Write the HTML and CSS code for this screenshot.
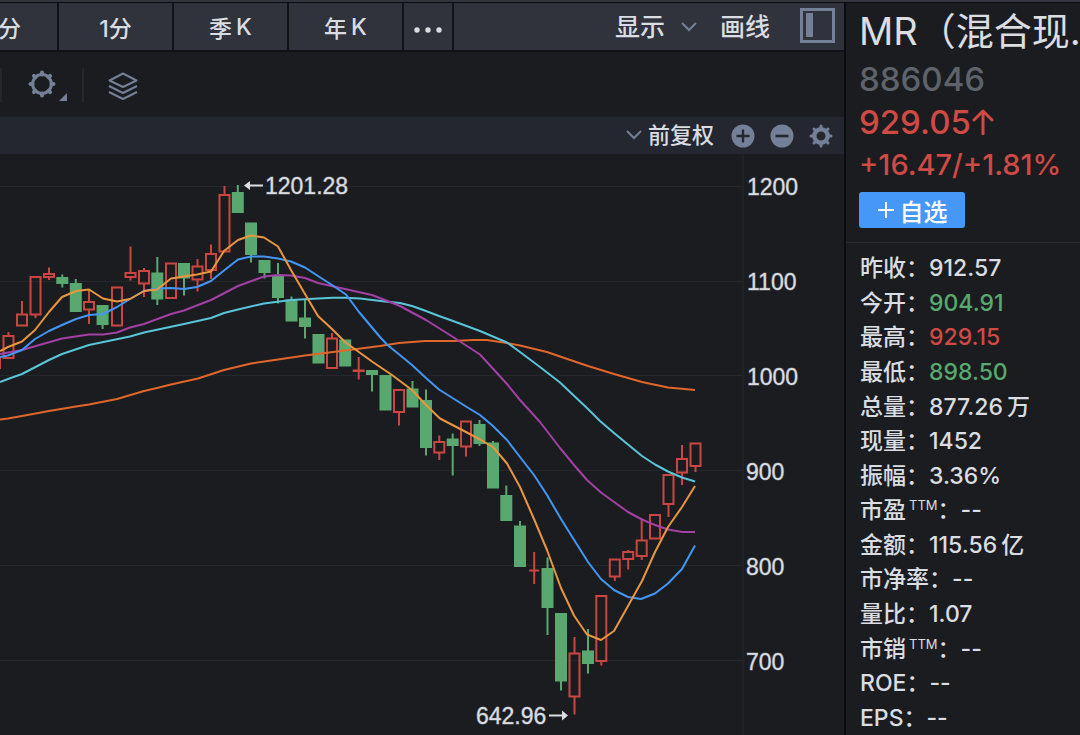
FILE: index.html
```html
<!DOCTYPE html>
<html lang="zh-CN">
<head>
<meta charset="utf-8">
<title>MR（混合现实） 886046</title>
<link rel="stylesheet" href="styles.css">
</head>
<body>
<div class="app">
  <main class="main">
    <nav class="tabs">
      <button class="tab tab-first">分</button>
      <button class="tab">1分</button>
      <button class="tab"><span>季</span><span>K</span></button>
      <button class="tab"><span>年</span><span>K</span></button>
      <button class="tab tab-more" aria-label="更多"><svg width="30" height="8" viewBox="0 0 30 8"><circle cx="4" cy="4" r="2.700"/><circle cx="15" cy="4" r="2.700"/><circle cx="26" cy="4" r="2.700"/></svg></button>
      <div class="tools">
        <button class="tool">显示<svg class="chevron" width="16" height="10" viewBox="0 0 16 10"><path d="M1 1l7 7 7-7"/></svg></button>
        <button class="tool">画线</button>
        <button class="tool" aria-label="侧栏"><svg width="35" height="35" viewBox="0 0 35 35"><rect x="1.5" y="1.5" width="32" height="32" fill="none" stroke="#738097" stroke-width="3"/><rect x="6" y="5" width="7" height="24" fill="#738097"/></svg></button>
      </div>
    </nav>
    <div class="iconbar">
      <span class="sep sep-edge"></span>
      <button class="icon-btn icon-gear" aria-label="设置"><svg width="40" height="32" viewBox="0 0 40 32">
        <circle cx="14" cy="15" r="9.4" fill="none" stroke="#738097" stroke-width="3"/>
        <path d="M14 3.500v2M14 24.500v2M2.500 15h2M23.500 15h2M5.900 6.900l1.400 1.400M20.700 21.700l1.400 1.400M5.900 23.100l1.400-1.400M20.700 8.300l1.400-1.400" stroke="#738097" stroke-width="4" stroke-linecap="round"/>
        <path d="M39 24v8h-8z" fill="#738097"/></svg></button>
      <span class="sep"></span>
      <button class="icon-btn icon-layers" aria-label="图层"><svg width="30" height="28" viewBox="0 0 30 28" fill="none" stroke="#738097" stroke-width="2" stroke-linejoin="round"><path d="M15 1.500L28.500 8.500 15 15 1.500 8.500z"/><path d="M1 14l14 7 14-7M1 20l14 7 14-7"/></svg></button>
    </div>
    <div class="adjust">
      <button class="adjust-label"><svg class="chevron" width="16" height="10" viewBox="0 0 16 10"><path d="M1 1l7 7 7-7"/></svg>前复权</button>
      <button class="icon-btn" aria-label="放大"><svg width="24" height="24" viewBox="0 0 24 24"><circle cx="12" cy="12" r="11.500" fill="#738097"/><path d="M12 5.500v13M5.500 12h13" stroke="#24272f" stroke-width="2.400"/></svg></button>
      <button class="icon-btn" aria-label="缩小"><svg width="24" height="24" viewBox="0 0 24 24"><circle cx="12" cy="12" r="11.500" fill="#738097"/><path d="M5.500 12h13" stroke="#24272f" stroke-width="2.600"/></svg></button>
      <button class="icon-btn" aria-label="指标设置"><svg width="24" height="24" viewBox="0 0 24 24" fill="none" stroke="#738097"><circle cx="12" cy="12" r="6.700" stroke-width="4.400"/><path d="M12 2v2M12 20v2M2 12h2M20 12h2M5 5l1.300 1.300M17.700 17.700l1.300 1.300M5 19l1.300-1.300M17.700 6.300L19 5" stroke-width="3" stroke-linecap="round"/></svg></button>
    </div>
    <svg class="chart" viewBox="0 154 844 581" preserveAspectRatio="xMinYMin meet" role="img" aria-label="K线图">
      <path class="grid" d="M0 186.500H743M0 281.500H743M0 375.500H743M0 470.500H743M0 565.500H743M0 660.500H743M743 154V735"/>
      <g id="candles"></g>
      <g class="averages">
        <polyline stroke="#e0662b" points="0,419.500 8,418.500 22,416 49,411 76,406.500 89,404.500 117,399 144,391 157,388 171,384.500 198,378.500 224,370 251,363.500 278,359.500 305,355.500 345,350.500 380,346 399,343 425,341 453,341 473,340 487,340 507,343 520,345.500 547,352 560,356.500 588,366 614,374 642,382 668,387.500 695,390"/>
        <polyline stroke="#59c5d8" points="0,382 8,379 22,374 49,360 62,354 89,345 130,336.500 144,332.500 184,324 211,318 224,313 238,309.500 264,303.500 291,300 318,298.500 333,297.800 345,297.800 360,298.500 385,301.500 400,303 412,306 426,311 439,316 453,321 480,331 507,342.500 520,352 540,367 560,382.500 588,409 600,421 614,433 642,456 655,464.500 668,471.500 682,477.500 695,481.500"/>
        <polyline stroke="#a240a4" points="0,354 22,350 62,338.500 89,334.500 103,334.500 117,332.500 130,327.500 144,324 171,314 184,310.500 211,300 238,286 264,276.500 278,275 291,275.500 305,278 318,283 345,289 372,295 385,300 400,306 412,312.500 426,320 453,337 480,354.500 507,384 520,400 540,422 560,448 574,465 587,480 601,492.500 628,512 642,519.500 655,525 668,529.500 682,532 695,532"/>
        <polyline stroke="#4396f3" points="0,357 8,355.500 22,350 35,339 49,331 62,325 76,319 89,315 103,314 117,307 130,299 144,291 157,288.500 171,288 184,289 197,287 211,281 224,270.500 238,259.500 251,256.500 264,256.500 278,258.500 291,261.500 305,267.500 318,276 332,285 346,294.500 359,312 380,337 387,344.500 412,365 426,378 439,389.500 466,406.500 480,415 493,426 507,440 520,457 534,475 547,495 561,519 588,562 601,579 614,590 628,597 641,599 655,593.500 668,583.500 682,569 695,545.500"/>
        <polyline stroke="#e8963f" points="0,351 8,347 22,341.500 35,330 49,312 62,297 76,291 89,289.500 103,298.500 117,301.500 130,299 144,291 157,289.500 171,278.500 184,276.500 197,274.500 211,271.500 224,251 238,240 251,235.500 264,237.500 278,246.500 291,270 305,294 318,316 332,329 345,342 372,361.500 392,375 412,390 426,405 440,418.500 466,432 480,439.500 493,447 507,463.500 520,487 534,519 547,550 561,588 574,615.500 587,634.500 601,640 614,631 628,606 642,581 655,552 668,527 682,507 695,486"/>
      </g>
      <g class="labels">
        <text x="747" y="195">1200</text><text x="747" y="290">1100</text><text x="747" y="385">1000</text>
        <text x="746" y="480">900</text><text x="746" y="575">800</text><text x="746" y="670">700</text>
        <text x="265" y="194">1201.28</text><text x="476" y="724">642.96</text>
      </g>
      <path d="M250 184.500h13v2h-13v3.500l-6-4.500 6-4.500zM549 714.500h13v-4l6 5-6 5v-4h-13z" fill="#dadde1"/>
    </svg>
  </main>
  <aside class="quote">
    <header class="summary">
      <h1 class="name">MR（混合现.</h1>
      <div class="code">886046</div>
      <div class="price">929.05<svg width="22" height="26" viewBox="0 0 22 26"><path d="M11 25V2M2 11l9-9 9 9"/></svg></div>
      <div class="change">+16.47/+1.81%</div>
      <button class="add"><svg width="18" height="18" viewBox="0 0 18 18"><path d="M9 1v16M1 9h16"/></svg>自选</button>
    </header>
    <dl class="stats">
      <div><dt>昨收：</dt><dd>912.57</dd></div>
      <div><dt>今开：</dt><dd class="down">904.91</dd></div>
      <div><dt>最高：</dt><dd class="up">929.15</dd></div>
      <div><dt>最低：</dt><dd class="down">898.50</dd></div>
      <div><dt>总量：</dt><dd>877.26<span class="unit">万</span></dd></div>
      <div><dt>现量：</dt><dd>1452</dd></div>
      <div><dt>振幅：</dt><dd>3.36%</dd></div>
      <div><dt>市盈<sup>TTM</sup>：</dt><dd>--</dd></div>
      <div><dt>金额：</dt><dd>115.56<span class="unit">亿</span></dd></div>
      <div><dt>市净率：</dt><dd>--</dd></div>
      <div><dt>量比：</dt><dd>1.07</dd></div>
      <div><dt>市销<sup>TTM</sup>：</dt><dd>--</dd></div>
      <div><dt>ROE：</dt><dd>--</dd></div>
      <div><dt>EPS：</dt><dd>--</dd></div>
    </dl>
  </aside>
</div>
<script src="chart.js"></script>
</body>
</html>
```

FILE: styles.css
```css
* { box-sizing: border-box; }
body {
  margin: 0;
  background: #1b1c1f;
  color: #dadde1;
  font-family: Inter, "Noto Sans CJK SC", sans-serif;
  overflow: hidden;
}
button {
  border: 0;
  padding: 0;
  background: none;
  color: inherit;
  font: inherit;
}
svg { display: block; flex: none; }
.app {
  display: flex;
  min-height: 100vh;
  border-top: 2px solid #32353e;
}
.main {
  flex: 1;
  min-width: 0;
  border-top: 1px solid #0b0c0e;
}

.tabs {
  display: flex;
  height: 49px;
  background: #30333b;
  border-bottom: 2px solid #101114;
  font-size: 23px;
  font-weight: 500;
}
.tab {
  display: flex;
  align-items: center;
  justify-content: center;
  gap: 4px;
  width: 115px;
  border-right: 2px solid #121316;
}
.tab-first {
  justify-content: flex-start;
  width: 61px;
  margin-left: -2px;
}
.tab-more { width: 50px; padding-top: 6px; fill: #dadde1; }
.tools {
  display: flex;
  align-items: center;
  gap: 23px;
  margin-left: auto;
  padding-right: 9px;
  font-size: 25px;
}
.tool { display: flex; align-items: center; gap: 16px; line-height: 36px; }
.tool:last-child { margin: 0 0 2px 7px; }
.chevron { fill: none; stroke: #738097; stroke-width: 2; }

.iconbar {
  display: flex;
  align-items: center;
  height: 65px;
}
.sep { width: 2px; height: 34px; background: #25272d; }
.icon-gear { margin: 0 14px 0 26px; }
.icon-layers { margin: 3px 0 0 24px; }

.adjust {
  display: flex;
  align-items: center;
  justify-content: flex-end;
  gap: 15px;
  height: 37px;
  padding-right: 11px;
  background: #24272f;
}
.adjust-label {
  display: flex;
  align-items: center;
  gap: 6px;
  margin: 0 2px 2px 0;
  font-size: 22px;
  font-weight: 500;
  line-height: 32px;
}

.chart { width: 100%; }
.grid { fill: none; stroke: #25272e; stroke-width: 1; }
.averages { fill: none; stroke-width: 2; stroke-linejoin: round; }
.labels {
  fill: #dadde1;
  stroke: #dadde1;
  stroke-width: 1;
  stroke-opacity: 0.4;
  font-family: "Liberation Sans", Arial, sans-serif;
  font-size: 23px;
}
.rise { fill: none; stroke: #cb4640; stroke-width: 2; }
.fall { fill: #58a86f; stroke: #58a86f; stroke-width: 2; }

.quote {
  display: flex;
  flex-direction: column;
  flex: 0 0 236px;
  height: calc(100vh - 2px);
  border-left: 2px solid #0b0c0e;
  border-top: 1px solid #0b0c0e;
  overflow: hidden;
}
.summary {
  padding: 0 0 14px 13px;
  border-bottom: 1px solid #282a2f;
}
.name {
  margin: 0;
  font-size: 38px;
  font-weight: 400;
  line-height: 56px;
  white-space: nowrap;
}
.code { font-size: 33px; font-weight: 500; line-height: 40px; color: #5e636a; }
.price {
  display: flex;
  align-items: center;
  gap: 1px;
  font-size: 33px;
  font-weight: 500;
  line-height: 46px;
  color: #cf4945;
}
.price svg { fill: none; stroke: #cf4945; stroke-width: 3; stroke-linecap: round; stroke-linejoin: round; }
.change { font-size: 29px; font-weight: 500; line-height: 40px; color: #cf4945; white-space: nowrap; }
.add {
  display: flex;
  align-items: center;
  justify-content: center;
  gap: 5px;
  width: 106px;
  height: 36px;
  margin-top: 7px;
  border-radius: 3px;
  background: #4598f7;
  color: #fff;
  font-size: 24px;
  font-weight: 500;
}
.add svg { stroke: #fff; stroke-width: 2; }

.stats {
  flex: 1;
  display: grid;
  grid-auto-rows: 1fr;
  margin: 0;
  padding: 8px 0 0 14px;
  font-size: 23px;
  font-weight: 500;
  line-height: 34px;
}
.stats div { display: flex; align-items: center; white-space: nowrap; }
.stats dt, .stats dd { margin: 0; }
.stats sup {
  margin-left: 3px;
  font-size: 13px;
  font-weight: 400;
  line-height: 14px;
  vertical-align: 8px;
}
.unit { margin-left: 4px; }
.up { color: #cf4945; }
.down { color: #58a86f; }
```

FILE: chart.js
```js
// Each candle: centre x, high, body top, body bottom, low, direction (1 rise, 0 fall)
const candles = [
  [-5, 357, 357, 369, 369, 1],
  [8.5, 332, 335, 359, 359, 1], [22, 301, 313.5, 326.5, 326.5, 1],
  [35.5, 276, 276, 315.5, 318, 1], [49, 267.5, 273, 278, 280, 1],
  [62.3, 274.5, 277, 284, 287.5, 0], [75.8, 279, 283, 312, 312, 0],
  [89, 290.5, 301, 310.5, 324, 1], [102.6, 305, 305, 325, 329, 0],
  [117, 286.5, 286.5, 326.5, 326.5, 1], [130.5, 246.5, 272, 278, 280.5, 1],
  [144, 268, 270, 284.5, 297, 1], [157.3, 257, 272.5, 299.5, 305, 0],
  [171, 262.5, 262.5, 299, 299, 1], [184, 263, 263, 278.5, 295.5, 0],
  [197.5, 259, 265.5, 280.5, 291.5, 1], [211, 244.5, 253, 271, 279, 1],
  [224.5, 186, 194, 252.5, 252.5, 1], [237.8, 185, 192, 213, 213, 0],
  [251, 222.5, 222.5, 255, 262.5, 0], [264.5, 260, 260, 273, 278.5, 0],
  [278, 263, 276, 298, 303.5, 0], [291.5, 296.5, 299.5, 321.5, 321.5, 0],
  [305, 299, 317.5, 327, 338.5, 0], [318.5, 334, 334, 363.5, 363.5, 0],
  [332, 333, 337.5, 369, 369, 1], [345.2, 339.5, 339.5, 366.5, 366.5, 0],
  [358.7, 357, 369.5, 372, 379.5, 1], [372, 370, 370, 375, 391.5, 0],
  [385.5, 375, 375, 410.5, 410.5, 0], [399, 389, 389, 413, 425.5, 1],
  [412.5, 381, 388.5, 407.5, 407.5, 0], [426, 389.5, 400, 448, 455.5, 0],
  [439.3, 435.5, 441, 453.5, 460, 1], [452.7, 433.5, 438.5, 446, 475.5, 0],
  [466, 420.5, 420.5, 447.5, 456.5, 1], [479.5, 420, 424, 444, 446, 0],
  [493, 441, 442.5, 488.5, 488.5, 0], [506.3, 485.5, 495, 521, 521, 0],
  [520, 521, 525.5, 567, 567, 0], [534.2, 552, 569.5, 571.5, 584, 1],
  [547.5, 557.5, 568, 608, 635, 0], [561, 613, 613, 681.5, 690.5, 0],
  [574.5, 637, 652.5, 697.5, 714.5, 1], [588, 629, 650.5, 664, 673.5, 0],
  [601.3, 595, 595, 662, 665.5, 1], [614.8, 558.5, 558.5, 577.5, 581, 1],
  [628.2, 550, 551, 560, 569.5, 1], [641.7, 518.5, 539.5, 557, 560, 1],
  [655, 514, 514, 539.5, 539.5, 1], [668.5, 474, 474, 505, 517, 1],
  [682, 445, 458, 473.5, 485, 1], [695.5, 442.5, 442.5, 467, 472, 1]
];

const layer = document.getElementById("candles");
for (const [x, high, top, bottom, low, rise] of candles) {
  const path = document.createElementNS("http://www.w3.org/2000/svg", "path");
  const t = top + 1;
  const b = Math.max(bottom - 1, t);
  path.setAttribute("class", rise ? "rise" : "fall");
  path.setAttribute("d", `M${x} ${high}V${t}M${x} ${b}V${low}M${x - 5} ${t}h10V${b}h-10z`);
  layer.append(path);
}
```
